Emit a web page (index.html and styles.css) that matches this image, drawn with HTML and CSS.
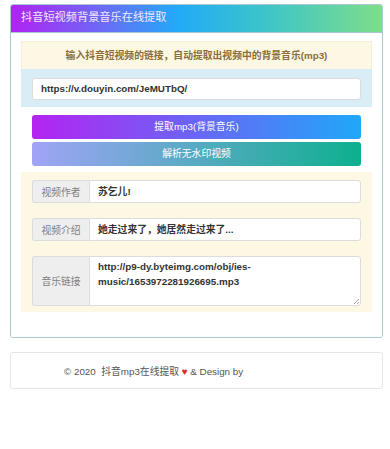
FILE: index.html
```html
<!DOCTYPE html>
<html lang="zh-CN">
<head>
<meta charset="utf-8">
<title>抖音短视频背景音乐在线提取</title>
<link rel="stylesheet" href="styles.css">
</head>
<body>
<div class="panel">
  <div class="panel-heading">抖音短视频背景音乐在线提取</div>
  <div class="panel-body">
    <div class="tip">输入抖音短视频的链接，自动提取出视频中的背景音乐(mp3)</div>
    <div class="url-row">
      <div class="field">https://v.douyin.com/JeMUTbQ/</div>
    </div>
    <div class="btn-row">
      <div class="btn btn-mp3">提取mp3(背景音乐)</div>
      <div class="btn btn-video">解析无水印视频</div>
    </div>
    <div class="result">
      <div class="group">
        <div class="addon">视频作者</div>
        <div class="value">苏乞儿!</div>
      </div>
      <div class="group">
        <div class="addon">视频介绍</div>
        <div class="value">她走过来了，她居然走过来了...</div>
      </div>
      <div class="group group-tall">
        <div class="addon">音乐链接</div>
        <div class="value value-area">http://p9-dy.byteimg.com/obj/ies-<br>music/1653972281926695.mp3<span class="grip"></span></div>
      </div>
    </div>
  </div>
</div>
<div class="footer">
  <span class="foot-text">© 2020&nbsp; 抖音mp3在线提取 <span class="heart">♥</span> &amp; Design by</span>
</div>
</body>
</html>
```

FILE: styles.css
```css
html, body {
  margin: 0;
  padding: 0;
  background: #fff;
}
body {
  font-family: "Liberation Sans", "Noto Sans CJK SC", Arial, sans-serif;
  font-size: 9.8px;
  color: #333;
  padding-top: 4px;
}
.panel {
  margin: 0 7px 0 10px;
  border: 1px solid #a9c8d4;
  border-radius: 3px;
  overflow: hidden;
}
.panel-heading {
  height: 27px;
  line-height: 25px;
  padding: 0 10px;
  color: #f1e8fb;
  font-size: 11.2px;
  background: linear-gradient(to right, #b023f2 0%, #6a6cf6 25%, #22aaf7 45%, #3fc6c6 70%, #7ede8a 100%);
  border-bottom: 1px solid #a9c8d4;
}
.panel-body {
  padding: 8px 10px 25px;
  background: #fff;
}
.tip {
  height: 27px;
  line-height: 27px;
  text-align: center;
  font-weight: bold;
  color: #8a6d3b;
  background: #fcf8e3;
  border: 1px solid #f7efd8;
  border-bottom: none;
}
.url-row {
  background: #d9edf7;
  padding: 9px 11px 7px;
}
.field, .value {
  background: #fff;
  border: 1px solid #dcdcdc;
  border-radius: 3px;
  box-sizing: border-box;
  height: 22px;
  line-height: 20px;
  padding: 0 8px;
  font-weight: bold;
  color: #333;
}
.btn-row {
  padding: 8px 11px 6px;
  display: flex;
  flex-direction: column;
  gap: 3px;
}
.btn {
  height: 24px;
  line-height: 24px;
  border-radius: 3px;
  text-align: center;
  color: #fff;
}
.btn-mp3 {
  background: linear-gradient(to right, #b424f1, #1fa8f9);
}
.btn-video {
  background: linear-gradient(to right, #a1a4f6, #0db08e);
}
.result {
  background: #fcf8e3;
  padding: 8px 11px 6px;
  display: flex;
  flex-direction: column;
  gap: 15px;
}
.group {
  display: flex;
  height: 23px;
}
.addon {
  width: 57px;
  flex: none;
  box-sizing: border-box;
  background: #eee;
  color: #808080;
  border: 1px solid #dcdcdc;
  border-right: none;
  border-radius: 3px 0 0 3px;
  display: flex;
  align-items: center;
  justify-content: center;
}
.group .value {
  flex: 1;
  height: 23px;
  line-height: 21px;
  border-radius: 0 3px 3px 0;
}
.group-tall {
  height: 50px;
}
.group-tall .value-area {
  height: 50px;
  line-height: 15px;
  padding-top: 2px;
  position: relative;
}
.grip {
  position: absolute;
  right: 1px;
  bottom: 1px;
  width: 5px;
  height: 5px;
  background: linear-gradient(135deg, transparent 45%, #aaa 45%, #aaa 55%, transparent 55%, transparent 75%, #aaa 75%, #aaa 85%, transparent 85%);
}
.footer {
  margin: 14px 7px 0 10px;
  border: 1px solid #e6e6e6;
  border-radius: 3px;
  height: 35px;
  display: flex;
  align-items: center;
  padding-left: 53px;
  color: #555;
}
.heart {
  color: #e0282b;
}
```
